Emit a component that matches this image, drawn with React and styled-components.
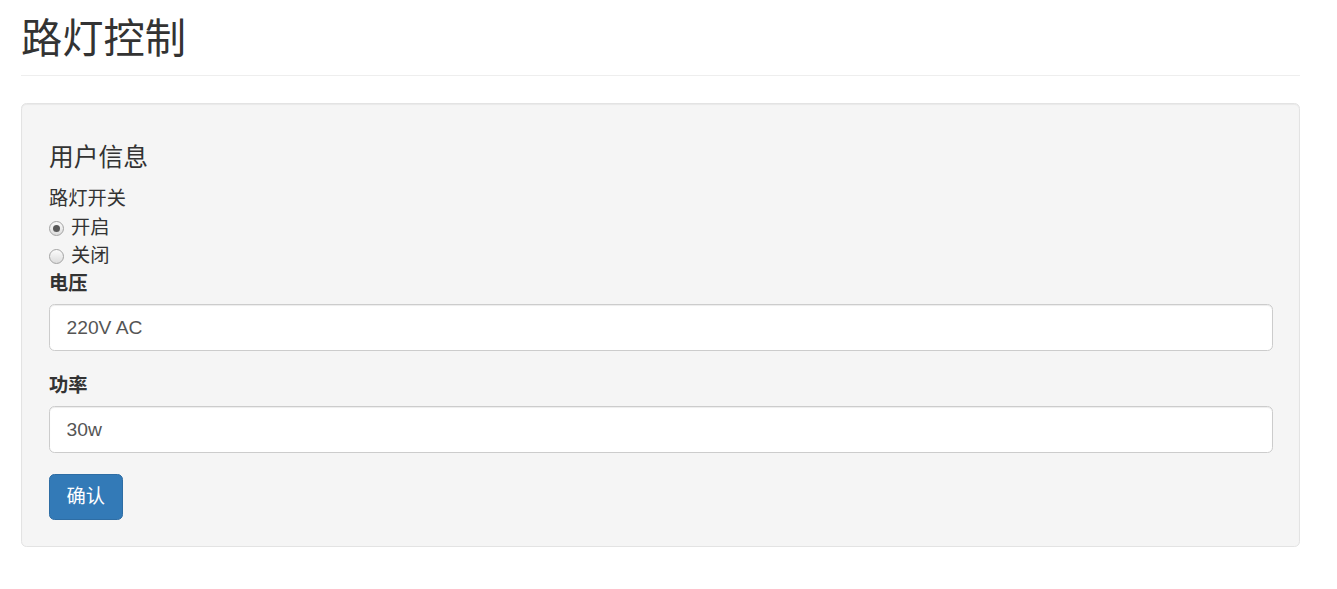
import React, { useState } from 'react';
import styled, { createGlobalStyle } from 'styled-components';

const GlobalStyle = createGlobalStyle`
  * { box-sizing: border-box; }
  body {
    margin: 0;
    background: #fff;
    color: #333;
    font-family: "Liberation Sans", "Noto Sans CJK SC", sans-serif;
    font-size: 19.25px;
    line-height: 1.42857;
  }
`;

const Page = styled.div`
  padding: 17px 37px 27px 21px;
`;

const PageHeader = styled.h1`
  margin: 0 0 26.5px;
  padding-bottom: 13px;
  border-bottom: 1px solid #eee;
  font-size: 41.25px;
  font-weight: 400;
  line-height: 1.1;
  color: #333;
`;

const Well = styled.div`
  background: #f5f5f5;
  border: 1px solid #e3e3e3;
  border-radius: 5.5px;
  box-shadow: inset 0 1px 1px rgba(0, 0, 0, 0.05);
  padding: 26px 26px 26px 27px;
`;

const SectionTitle = styled.h4`
  margin: 13.75px 0;
  font-size: 24.75px;
  font-weight: 400;
  line-height: 1.1;
`;

const Label = styled.label`
  display: block;
  font-weight: ${p => (p.bold ? 700 : 400)};
  margin-bottom: ${p => (p.bold ? '6.9px' : '0')};
  line-height: 27.5px;
`;

const RadioGroup = styled.div`
  margin-top: 2px;
`;

const RadioRow = styled.label`
  display: flex;
  align-items: center;
  height: 28px;
  gap: 7px;
  cursor: pointer;
`;

const RadioInput = styled.input`
  appearance: none;
  flex-shrink: 0;
  margin: 0;
  width: 15px;
  height: 15px;
  border-radius: 50%;
  border: 1px solid #a3a3a3;
  background: linear-gradient(#fbfbfb, #dcdcdc);
  display: grid;
  place-items: center;

  &:checked::after {
    content: '';
    width: 7px;
    height: 7px;
    border-radius: 50%;
    background: #595959;
  }
`;

const FormGroup = styled.div`
  margin-bottom: ${p => (p.last ? '0' : '20.6px')};
`;

const TextInput = styled.input`
  display: block;
  width: 100%;
  height: 46.75px;
  padding: 8.25px 16.5px;
  font: inherit;
  color: #555;
  background: #fff;
  border: 1px solid #ccc;
  border-radius: 5.5px;
  box-shadow: inset 0 1px 1px rgba(0, 0, 0, 0.075);
  outline: none;
`;

const Button = styled.button`
  display: inline-block;
  padding: 8.25px 16.5px;
  font: inherit;
  line-height: 27.5px;
  color: #fff;
  background: #337ab7;
  border: 1px solid #2e6da4;
  border-radius: 5.5px;
  cursor: pointer;
`;

export default function App() {
  const [on, setOn] = useState(true);
  const [voltage, setVoltage] = useState('220V AC');
  const [power, setPower] = useState('30w');

  return (
    <>
      <GlobalStyle />
      <Page>
        <PageHeader>路灯控制</PageHeader>
        <Well>
          <SectionTitle>用户信息</SectionTitle>
          <Label>路灯开关</Label>
          <RadioGroup>
            <RadioRow>
              <RadioInput type="radio" name="light" checked={on} onChange={() => setOn(true)} />
              开启
            </RadioRow>
            <RadioRow>
              <RadioInput type="radio" name="light" checked={!on} onChange={() => setOn(false)} />
              关闭
            </RadioRow>
          </RadioGroup>
          <FormGroup>
            <Label bold>电压</Label>
            <TextInput value={voltage} onChange={e => setVoltage(e.target.value)} />
          </FormGroup>
          <FormGroup>
            <Label bold>功率</Label>
            <TextInput value={power} onChange={e => setPower(e.target.value)} />
          </FormGroup>
          <FormGroup last>
            <Button type="button">确认</Button>
          </FormGroup>
        </Well>
      </Page>
    </>
  );
}
